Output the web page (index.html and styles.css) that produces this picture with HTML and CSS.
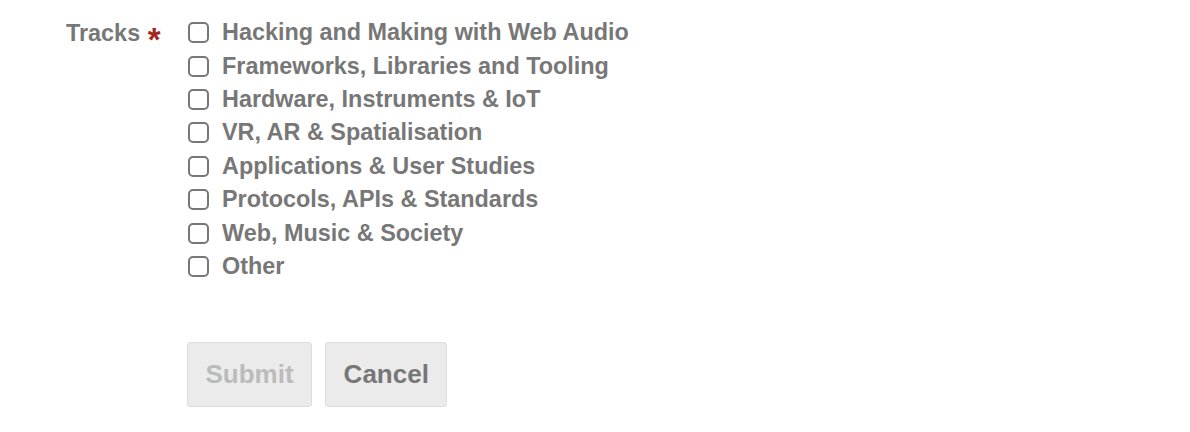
FILE: index.html
```html
<!DOCTYPE html>
<html lang="en">
<head>
    <meta charset="UTF-8">
    <title>Tracks</title>
    <link rel="stylesheet" href="styles.css">
</head>
<body>
    <form class="form">
        <div class="field">
            <div class="field-label">Tracks <span class="required">*</span></div>
            <div class="options">
                <label class="option"><span class="box"></span>Hacking and Making with Web Audio</label>
                <label class="option"><span class="box"></span>Frameworks, Libraries and Tooling</label>
                <label class="option"><span class="box"></span>Hardware, Instruments &amp; IoT</label>
                <label class="option"><span class="box"></span>VR, AR &amp; Spatialisation</label>
                <label class="option"><span class="box"></span>Applications &amp; User Studies</label>
                <label class="option"><span class="box"></span>Protocols, APIs &amp; Standards</label>
                <label class="option"><span class="box"></span>Web, Music &amp; Society</label>
                <label class="option"><span class="box"></span>Other</label>
            </div>
        </div>
        <div class="actions">
            <button type="button" class="btn btn-disabled">Submit</button>
            <button type="button" class="btn">Cancel</button>
        </div>
    </form>
</body>
</html>
```

FILE: styles.css
```css
body {
    margin: 0;
    padding: 16px 0 0 66px;
    font-family: "Liberation Sans", Arial, sans-serif;
    font-weight: bold;
    color: #777;
    background: #fff;
}
.field {
    display: flex;
}
.field-label {
    width: 121px;
    font-size: 23.4px;
    line-height: 34px;
}
.required {
    color: #a5251f;
    font-size: 33px;
    vertical-align: -10px;
    margin-left: 1px;
}
.options {
    display: flex;
    flex-direction: column;
}
.option {
    display: flex;
    align-items: center;
    height: 33.4px;
    font-size: 23.4px;
}
.box {
    width: 17px;
    height: 17px;
    border: 2px solid #777;
    border-radius: 5px;
    margin: 0 13px 0 1px;
}
.actions {
    display: flex;
    gap: 13px;
    margin: 59px 0 0 121px;
}
.btn {
    height: 65px;
    padding: 0 17.5px;
    font-family: inherit;
    font-weight: bold;
    font-size: 26px;
    color: #777;
    background: #ebebeb;
    border: 1px solid #ddd;
    border-radius: 3px;
}
.btn-disabled {
    color: #bbb;
}
```
